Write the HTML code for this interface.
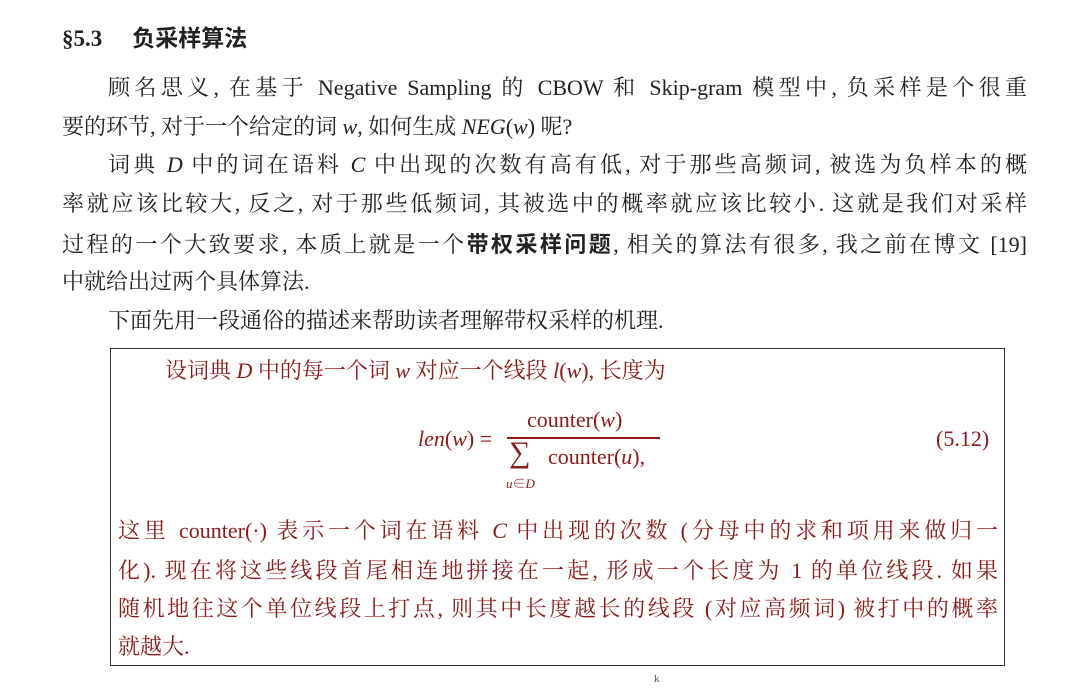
<!DOCTYPE html>
<html><head><meta charset="utf-8"><style>
body{margin:0;width:1074px;height:677px;background:#fff;position:relative;overflow:hidden;font-family:"Liberation Serif","Noto Serif CJK SC",serif;color:#222;}
.l{position:absolute;font-size:22px;line-height:26px;white-space:nowrap;}
.j{text-align:justify;text-align-last:justify;white-space:normal;}
i{font-style:italic}
.r{color:#8b1a1a}
.box{position:absolute;left:110px;top:348px;width:893px;height:316px;border:1.5px solid #333;}
</style></head><body>
<div class="l" style="left:62px;top:26px;font-weight:bold;font-size:23px;font-family:'Liberation Serif','Noto Sans CJK SC',serif">§5.3<span style="margin-left:30px">负采样算法</span></div>
<div class="l j" style="left:108px;top:75px;width:919px">顾名思义, 在基于 Negative Sampling 的 CBOW 和 Skip-gram 模型中, 负采样是个很重</div>
<div class="l" style="left:62px;top:114px">要的环节, 对于一个给定的词 <i>w</i>, 如何生成 <i>NEG</i>(<i>w</i>) 呢?</div>
<div class="l j" style="left:108px;top:152px;width:919px">词典 <i>D</i> 中的词在语料 <i>C</i> 中出现的次数有高有低, 对于那些高频词, 被选为负样本的概</div>
<div class="l j" style="left:62px;top:191px;width:965px">率就应该比较大, 反之, 对于那些低频词, 其被选中的概率就应该比较小. 这就是我们对采样</div>
<div class="l j" style="left:62px;top:230px;width:965px">过程的一个大致要求, 本质上就是一个<b style="font-family:'Noto Sans CJK SC',sans-serif">带权采样问题</b>, 相关的算法有很多, 我之前在博文 [19]</div>
<div class="l" style="left:62px;top:269px">中就给出过两个具体算法.</div>
<div class="l" style="left:108px;top:308px">下面先用一段通俗的描述来帮助读者理解带权采样的机理.</div>
<div class="box"></div>
<div class="l r" style="left:165px;top:358px">设词典 <i>D</i> 中的每一个词 <i>w</i> 对应一个线段 <i>l</i>(<i>w</i>), 长度为</div>
<div class="l r" style="left:418px;top:426px"><i>len</i>(<i>w</i>) =</div>
<div class="l r" style="left:527px;top:407px">counter(<i>w</i>)</div>
<div style="position:absolute;left:507px;top:437px;width:153px;height:1.5px;background:#8b1a1a"></div>
<div class="l r" style="left:509px;top:440px;font-size:30px">∑</div>
<div class="l r" style="left:548px;top:444px">counter(<i>u</i>)<span>,</span></div>
<div class="l r" style="left:506px;top:471px;font-size:13px"><i>u</i>∈<i>D</i></div>
<div class="l r" style="left:936px;top:426px">(5.12)</div>
<div class="l r j" style="left:118px;top:518px;width:880px">这里 counter(·) 表示一个词在语料 <i>C</i> 中出现的次数 (分母中的求和项用来做归一</div>
<div class="l r j" style="left:118px;top:558px;width:880px">化). 现在将这些线段首尾相连地拼接在一起, 形成一个长度为 1 的单位线段. 如果</div>
<div class="l r j" style="left:118px;top:596px;width:880px">随机地往这个单位线段上打点, 则其中长度越长的线段 (对应高频词) 被打中的概率</div>
<div class="l r" style="left:118px;top:634px">就越大.</div>
<div class="l" style="left:654px;top:666px;font-size:11px;color:#555">k</div>
</body></html>
